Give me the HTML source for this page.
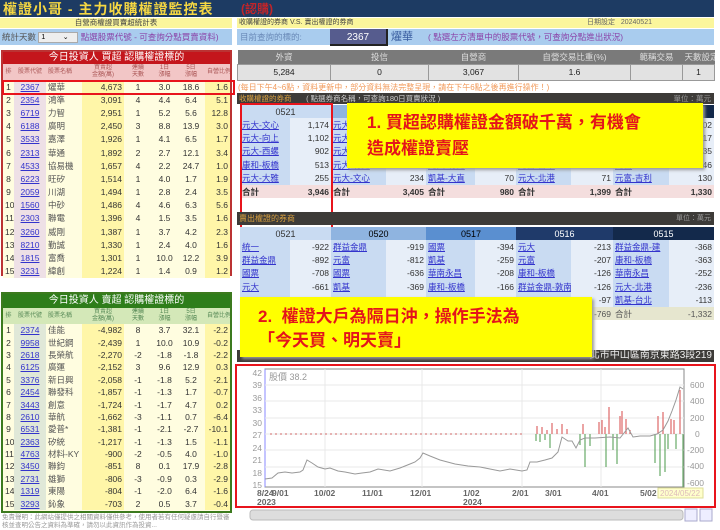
<!DOCTYPE html>
<html><head><meta charset="utf-8"><style>
*{margin:0;padding:0;box-sizing:border-box}
body{width:720px;height:528px;overflow:hidden;background:#fff;font-family:"Liberation Sans","Noto Sans CJK TC",sans-serif;position:relative;font-size:9px}
.a{position:absolute}
table{border-collapse:collapse;table-layout:fixed}
td{padding:0 2px;white-space:nowrap;overflow:hidden}
.lt td{height:13.2px;font-size:8.5px;color:#333;line-height:10px}
.g td{height:12.4px}
.lt td:nth-child(1){text-align:center}
.lt td:nth-child(2){text-align:center;background:#eee0e6;color:#33c;text-decoration:underline}
.lt td:nth-child(3){color:#555}
.lt td:nth-child(4){background:#fff6a8;text-align:right}
.lt td:nth-child(5),.lt td:nth-child(6),.lt td:nth-child(7){text-align:center}
.lt td:nth-child(8){text-align:right;background:#fff6a8}
.lt tr{background:#fffde0}
.g td:nth-child(2){background:#e0e8d8}
.bt td{height:13.4px;font-size:8.5px}
.bt td.n{background:#c9dbf2;color:#33c;text-decoration:underline}
.bt td.v{background:#e7eef8;text-align:right;color:#333}
.bt tr.t td{background:#f4dede;font-weight:bold;color:#333}
.bt tr.t2 td{background:#e6e6cf;color:#555}
.hd td{height:13px;text-align:center;font-size:9px}
.call{background:#ffff00;color:#e4141b;font-weight:bold;font-family:"Liberation Sans","Noto Sans CJK TC",sans-serif;box-shadow:2px 2px 3px #999}
</style></head><body>

<div class="a" style="left:0;top:0;width:714px;height:17px;background:#1d3b63"></div>
<div class="a" style="left:3px;top:-1px;font-size:14px;font-weight:bold;color:#f5d742;letter-spacing:1px">權證小哥 - 主力收購權證監控表</div>
<div class="a" style="left:241px;top:0px;font-size:12px;font-weight:bold;color:#c0252a">(認購)</div>

<div class="a" style="left:0;top:18px;width:232px;height:10px;background:#fbf69c;font-size:7.5px;text-align:center;line-height:10px;color:#444">自營商權證買賣超統計表</div>
<div class="a" style="left:0;top:29px;width:232px;height:16px;background:#a9ccee;font-size:8.5px;line-height:16px;color:#555;padding-left:2px">統計天數 <span style="display:inline-block;width:40px;height:11px;background:#eee;border:1px solid #aaa;vertical-align:middle;font-size:7px;line-height:9px;color:#000">&nbsp;1 &nbsp;&nbsp;&nbsp;&nbsp;&nbsp;&nbsp;&nbsp;&nbsp;⌄</span> <span style="color:#8b44a8">點選股票代號 - 可查詢分點買賣資料)</span></div>

<div class="a" style="left:1px;top:50px;width:231px;height:226px;border:2px solid #b33;background:#fffde0"></div>
<div class="a" style="left:3px;top:52px;width:227px;height:12px;background:#c4161c;color:#fff;font-size:10px;text-align:center;line-height:12px">今日投資人 買超 認購權證標的</div>
<table class="a lt" style="left:3px;top:64px;width:227px">
<colgroup><col style="width:11px"><col style="width:32px"><col style="width:36px"><col style="width:42px"><col style="width:28px"><col style="width:25px"><col style="width:28px"><col style="width:25px"></colgroup>
<tr style="background:#f2c6c6;height:16px"><td style="font-size:6px;color:#a55;line-height:7px">排</td><td style="font-size:6px;color:#a55;background:#f2c6c6;text-decoration:none;line-height:7px">股票代號</td><td style="font-size:6px;color:#a55;line-height:7px">股票名稱</td><td style="font-size:6px;color:#a55;text-align:center;background:#f2c6c6;line-height:7px">買賣超<br>金額(萬)</td><td style="font-size:6px;color:#a55;line-height:7px">連續<br>天數</td><td style="font-size:6px;color:#a55;line-height:7px">1日<br>漲幅</td><td style="font-size:6px;color:#a55;line-height:7px">5日<br>漲幅</td><td style="font-size:6px;color:#a55;background:#f2c6c6;text-align:center;line-height:7px">自營比例</td></tr>
<tr><td>1</td><td>2367</td><td>燿華</td><td>4,673</td><td>1</td><td>3.0</td><td>18.6</td><td>1.6</td></tr>
<tr><td>2</td><td>2354</td><td>鴻準</td><td>3,091</td><td>4</td><td>4.4</td><td>6.4</td><td>5.1</td></tr>
<tr><td>3</td><td>6719</td><td>力智</td><td>2,951</td><td>1</td><td>5.2</td><td>5.6</td><td>12.8</td></tr>
<tr><td>4</td><td>6188</td><td>廣明</td><td>2,450</td><td>3</td><td>8.8</td><td>13.9</td><td>3.0</td></tr>
<tr><td>5</td><td>3533</td><td>嘉澤</td><td>1,926</td><td>1</td><td>4.1</td><td>6.5</td><td>1.7</td></tr>
<tr><td>6</td><td>2313</td><td>華通</td><td>1,892</td><td>2</td><td>2.7</td><td>12.1</td><td>3.4</td></tr>
<tr><td>7</td><td>4533</td><td>協易機</td><td>1,657</td><td>4</td><td>2.2</td><td>24.7</td><td>1.0</td></tr>
<tr><td>8</td><td>6223</td><td>旺矽</td><td>1,514</td><td>1</td><td>4.0</td><td>1.7</td><td>1.9</td></tr>
<tr><td>9</td><td>2059</td><td>川湖</td><td>1,494</td><td>1</td><td>2.8</td><td>2.4</td><td>3.5</td></tr>
<tr><td>10</td><td>1560</td><td>中砂</td><td>1,486</td><td>4</td><td>4.6</td><td>6.3</td><td>5.6</td></tr>
<tr><td>11</td><td>2303</td><td>聯電</td><td>1,396</td><td>4</td><td>1.5</td><td>3.5</td><td>1.6</td></tr>
<tr><td>12</td><td>3260</td><td>威剛</td><td>1,387</td><td>1</td><td>3.7</td><td>4.2</td><td>2.3</td></tr>
<tr><td>13</td><td>8210</td><td>勤誠</td><td>1,330</td><td>1</td><td>2.4</td><td>4.0</td><td>1.6</td></tr>
<tr><td>14</td><td>1815</td><td>富喬</td><td>1,301</td><td>1</td><td>10.0</td><td>12.2</td><td>3.9</td></tr>
<tr><td>15</td><td>3231</td><td>緯創</td><td>1,224</td><td>1</td><td>1.4</td><td>0.9</td><td>1.2</td></tr>
</table>
<div class="a" style="left:2px;top:80px;width:233px;height:15px;border:2px solid #e8141c"></div>

<div class="a" style="left:1px;top:292px;width:231px;height:221px;border:2px solid #3c7a1e;background:#fffde0"></div>
<div class="a" style="left:3px;top:294px;width:227px;height:14px;background:#2e7d1a;color:#fff;font-size:10px;text-align:center;line-height:14px">今日投資人 賣超 認購權證標的</div>
<table class="a lt g" style="left:3px;top:308px;width:227px">
<colgroup><col style="width:11px"><col style="width:32px"><col style="width:36px"><col style="width:42px"><col style="width:28px"><col style="width:25px"><col style="width:28px"><col style="width:25px"></colgroup>
<tr style="background:#d4e8b8;height:16px"><td style="font-size:6px;color:#585;line-height:7px">排</td><td style="font-size:6px;color:#585;background:#d4e8b8;text-decoration:none;line-height:7px">股票代號</td><td style="font-size:6px;color:#585;line-height:7px">股票名稱</td><td style="font-size:6px;color:#585;text-align:center;background:#d4e8b8;line-height:7px">買賣超<br>金額(萬)</td><td style="font-size:6px;color:#585;line-height:7px">連續<br>天數</td><td style="font-size:6px;color:#585;line-height:7px">1日<br>漲幅</td><td style="font-size:6px;color:#585;line-height:7px">5日<br>漲幅</td><td style="font-size:6px;color:#585;background:#d4e8b8;text-align:center;line-height:7px">自營比例</td></tr>
<tr><td>1</td><td>2374</td><td>佳能</td><td>-4,982</td><td>8</td><td>3.7</td><td>32.1</td><td>-2.2</td></tr>
<tr><td>2</td><td>9958</td><td>世紀鋼</td><td>-2,439</td><td>1</td><td>10.0</td><td>10.9</td><td>-0.2</td></tr>
<tr><td>3</td><td>2618</td><td>長榮航</td><td>-2,270</td><td>-2</td><td>-1.8</td><td>-1.8</td><td>-2.2</td></tr>
<tr><td>4</td><td>6125</td><td>廣運</td><td>-2,152</td><td>3</td><td>9.6</td><td>12.9</td><td>0.3</td></tr>
<tr><td>5</td><td>3376</td><td>新日興</td><td>-2,058</td><td>-1</td><td>-1.8</td><td>5.2</td><td>-2.1</td></tr>
<tr><td>6</td><td>2454</td><td>聯發科</td><td>-1,857</td><td>-1</td><td>-1.3</td><td>1.7</td><td>-0.7</td></tr>
<tr><td>7</td><td>3443</td><td>創意</td><td>-1,724</td><td>-1</td><td>-1.7</td><td>4.7</td><td>0.2</td></tr>
<tr><td>8</td><td>2610</td><td>華航</td><td>-1,662</td><td>-3</td><td>-1.1</td><td>0.7</td><td>-6.4</td></tr>
<tr><td>9</td><td>6531</td><td>愛普*</td><td>-1,381</td><td>-1</td><td>-2.1</td><td>-2.7</td><td>-10.1</td></tr>
<tr><td>10</td><td>2363</td><td>矽統</td><td>-1,217</td><td>-1</td><td>-1.3</td><td>1.5</td><td>-1.1</td></tr>
<tr><td>11</td><td>4763</td><td>材料-KY</td><td>-900</td><td>-2</td><td>-0.5</td><td>4.0</td><td>-1.0</td></tr>
<tr><td>12</td><td>3450</td><td>聯鈞</td><td>-851</td><td>8</td><td>0.1</td><td>17.9</td><td>-2.8</td></tr>
<tr><td>13</td><td>2731</td><td>雄獅</td><td>-806</td><td>-3</td><td>-0.9</td><td>0.3</td><td>-2.9</td></tr>
<tr><td>14</td><td>1319</td><td>東陽</td><td>-804</td><td>-1</td><td>-2.0</td><td>6.4</td><td>-1.6</td></tr>
<tr><td>15</td><td>3293</td><td>鈊象</td><td>-703</td><td>2</td><td>0.5</td><td>3.7</td><td>-0.4</td></tr>
</table>
<div class="a" style="left:2px;top:514px;width:232px;font-size:6.5px;color:#999;line-height:8px">免責聲明：此網站僅提供之相關資料僅供參考，使用者若有任何疑慮請自行暨審核並查明公告之資料為準確，請勿以此資訊作為投資...</div>

<div class="a" style="left:237px;top:18px;width:477px;height:10px;background:#fbf69c;font-size:7px;line-height:10px;color:#444;padding-left:2px">收購權證的券商 V.S. 賣出權證的券商<span style="position:absolute;left:350px;color:#666">日期設定 &nbsp;&nbsp;20240521</span></div>
<div class="a" style="left:237px;top:29px;width:477px;height:16px;background:#a9ccee;font-size:8.5px;line-height:16px;color:#6a8ab8;padding-left:3px">目前查詢的標的:</div>
<div class="a" style="left:330px;top:29px;width:58px;height:17px;background:#565c8e;color:#fff;font-size:10px;text-align:center;line-height:17px;border-right:2px solid #222;border-bottom:2px solid #222">2367</div>
<div class="a" style="left:391px;top:29px;font-size:11px;line-height:16px;color:#3a5ea0">燿華</div>
<div class="a" style="left:428px;top:29px;font-size:8.5px;line-height:16px;color:#8b44a8">( 點選左方清單中的股票代號，可查詢分點進出狀況)</div>

<table class="a" style="left:237px;top:50px;width:477px;font-size:8.5px">
<colgroup><col style="width:93px"><col style="width:98px"><col style="width:90px"><col style="width:112px"><col style="width:52px"><col style="width:32px"></colgroup>
<tr style="background:#7a7a7a;color:#ddd;height:14px;text-align:center"><td>外資</td><td>投信</td><td>自營商</td><td>自營交易比重(%)</td><td>範稱交易</td><td>天數設定</td></tr>
<tr style="background:#e2e2e2;color:#222;height:16px;text-align:center"><td style="border:1px solid #999">5,284</td><td style="border:1px solid #999">0</td><td style="border:1px solid #999">3,067</td><td style="border:1px solid #999">1.6</td><td style="border:1px solid #999"></td><td style="border:1px solid #999">1</td></tr>
</table>
<div class="a" style="left:238px;top:82px;font-size:8px;color:#f29a5a">(每日下午4~6點，資料更新中，部分資料無法完整呈現，請在下午6點之後再進行操作！)</div>

<div class="a" style="left:237px;top:93px;width:477px;height:11px;background:#3d3b38;font-size:7.5px;line-height:11px;color:#ccc;padding-left:2px"><span style="color:#d8a040">收購權證的券商</span> &nbsp;&nbsp;&nbsp;&nbsp;&nbsp;&nbsp;( 點選券商名稱，可查詢180日買賣狀況 )<span style="position:absolute;right:3px;color:#999">單位：萬元</span></div>

<table class="a bt" style="left:240px;top:105px;width:474px">
<colgroup><col style="width:50px"><col style="width:41px"><col style="width:55px"><col style="width:40px"><col style="width:49px"><col style="width:41px"><col style="width:55px"><col style="width:42px"><col style="width:56px"><col style="width:45px"></colgroup>
<tr class="hd"><td colspan="2" style="background:#c9dbf2;color:#333">0521</td><td colspan="2" style="background:#8fb4e0">0520</td><td colspan="2" style="background:#5a8fd0">0517</td><td colspan="2" style="background:#1f3a6a;color:#fff">0516</td><td colspan="2" style="background:#13294b;color:#fff">0515</td></tr>
<tr><td class="n">元大-文心</td><td class="v">1,174</td><td class="n">元大</td><td class="v"></td><td class="n"></td><td class="v"></td><td class="n"></td><td class="v"></td><td class="n"></td><td class="v">402</td></tr>
<tr><td class="n">元大-向上</td><td class="v">1,102</td><td class="n">元大</td><td class="v"></td><td class="n"></td><td class="v"></td><td class="n"></td><td class="v"></td><td class="n"></td><td class="v">317</td></tr>
<tr><td class="n">元大-西螺</td><td class="v">902</td><td class="n">元大</td><td class="v"></td><td class="n"></td><td class="v"></td><td class="n"></td><td class="v"></td><td class="n"></td><td class="v">235</td></tr>
<tr><td class="n">康和-板橋</td><td class="v">513</td><td class="n">元大-竹北</td><td class="v">330</td><td class="n">元大-竹北</td><td class="v">77</td><td class="n">元富-台中</td><td class="v">161</td><td class="n">元富</td><td class="v">146</td></tr>
<tr><td class="n">元大-大雅</td><td class="v">255</td><td class="n">元大-文心</td><td class="v">234</td><td class="n">凱基-大直</td><td class="v">70</td><td class="n">元大-北港</td><td class="v">71</td><td class="n">元富-吉利</td><td class="v">130</td></tr>
<tr class="t"><td>合計</td><td style="text-align:right">3,946</td><td>合計</td><td style="text-align:right">3,405</td><td>合計</td><td style="text-align:right">980</td><td>合計</td><td style="text-align:right">1,399</td><td>合計</td><td style="text-align:right">1,330</td></tr>
</table>
<div class="a" style="left:240px;top:103px;width:93px;height:168px;border:2px solid #e8141c"></div>

<div class="a" style="left:237px;top:212px;width:477px;height:13px;background:#3d3b38;font-size:8px;line-height:13px;color:#d8a040;padding-left:2px">賣出權證的券商<span style="position:absolute;right:3px;color:#999;font-size:7px">單位：萬元</span></div>
<table class="a bt" style="left:240px;top:227px;width:474px">
<colgroup><col style="width:50px"><col style="width:41px"><col style="width:55px"><col style="width:40px"><col style="width:49px"><col style="width:41px"><col style="width:55px"><col style="width:42px"><col style="width:56px"><col style="width:45px"></colgroup>
<tr class="hd"><td colspan="2" style="background:#c9dbf2;color:#333">0521</td><td colspan="2" style="background:#8fb4e0">0520</td><td colspan="2" style="background:#5a8fd0">0517</td><td colspan="2" style="background:#1f3a6a;color:#fff">0516</td><td colspan="2" style="background:#13294b;color:#fff">0515</td></tr>
<tr><td class="n">統一</td><td class="v">-922</td><td class="n">群益金鼎</td><td class="v">-919</td><td class="n">國票</td><td class="v">-394</td><td class="n">元大</td><td class="v">-213</td><td class="n">群益金鼎-建</td><td class="v">-368</td></tr>
<tr><td class="n">群益金鼎</td><td class="v">-892</td><td class="n">元富</td><td class="v">-812</td><td class="n">凱基</td><td class="v">-259</td><td class="n">元富</td><td class="v">-207</td><td class="n">康和-板橋</td><td class="v">-363</td></tr>
<tr><td class="n">國票</td><td class="v">-708</td><td class="n">國票</td><td class="v">-636</td><td class="n">華南永昌</td><td class="v">-208</td><td class="n">康和-板橋</td><td class="v">-126</td><td class="n">華南永昌</td><td class="v">-252</td></tr>
<tr><td class="n">元大</td><td class="v">-661</td><td class="n">凱基</td><td class="v">-369</td><td class="n">康和-板橋</td><td class="v">-166</td><td class="n">群益金鼎-敦南</td><td class="v">-126</td><td class="n">元大-北港</td><td class="v">-236</td></tr>
<tr><td class="n"></td><td class="v"></td><td class="n"></td><td class="v"></td><td class="n"></td><td class="v"></td><td class="n"></td><td class="v">-97</td><td class="n">凱基-台北</td><td class="v">-113</td></tr>
<tr class="t2"><td></td><td></td><td></td><td></td><td></td><td></td><td></td><td style="text-align:right">-769</td><td>合計</td><td style="text-align:right">-1,332</td></tr>
</table>

<div class="a" style="left:237px;top:350px;width:477px;height:12px;background:#3d3b38;color:#eee;font-size:10px;line-height:12px;text-align:right;padding-right:2px;overflow:hidden">北市中山區南京東路3段219</div>

<div class="a call" style="left:347px;top:103px;width:356px;height:65px;font-size:17px;line-height:26px;padding:7px 0 0 20px">1. 買超認購權證金額破千萬，有機會<br>造成權證賣壓</div>
<div class="a call" style="left:240px;top:297px;width:352px;height:60px;font-size:17px;line-height:24px;padding:8px 0 0 18px">2.&nbsp; 權證大戶為隔日沖，操作手法為<br>「今天買、明天賣」</div>

<div class="a" style="left:235px;top:364px;width:481px;height:144px;border:2px solid #e8141c;background:#fff"></div>
<svg class="a" style="left:0;top:0" width="720" height="528" font-family="Liberation Sans" font-size="8" fill="#999">
<rect x="265" y="369" width="419" height="118" fill="none" stroke="#888"/>
<line x1="265" y1="369" x2="265" y2="487" stroke="#88f"/>
<g stroke="#e8e8e8"><line x1="325" y1="369" x2="325" y2="487"/><line x1="422" y1="369" x2="422" y2="487"/><line x1="522" y1="369" x2="522" y2="487"/><line x1="601" y1="369" x2="601" y2="487"/><line x1="265" y1="385" x2="684" y2="385"/><line x1="265" y1="401" x2="684" y2="401"/><line x1="265" y1="418" x2="684" y2="418"/><line x1="265" y1="434" x2="684" y2="434"/><line x1="265" y1="450" x2="684" y2="450"/><line x1="265" y1="467" x2="684" y2="467"/></g>
<g text-anchor="end" font-size="8.5"><text x="262" y="376">42</text><text x="262" y="388">39</text><text x="262" y="401">36</text><text x="262" y="413">33</text><text x="262" y="426">30</text><text x="262" y="438">27</text><text x="262" y="451">24</text><text x="262" y="463">21</text><text x="262" y="476">18</text><text x="262" y="488">15</text></g>
<g font-size="8.5"><text x="690" y="388">600</text><text x="690" y="404">400</text><text x="690" y="421">200</text><text x="695" y="437">0</text><text x="687" y="453">-200</text><text x="687" y="469">-400</text><text x="687" y="486">-600</text></g>
<text x="269" y="380" font-size="9">股價 38.2</text>
<g stroke="#d66" stroke-width="1.2"><line x1="537" y1="434" x2="537" y2="426"/><line x1="542" y1="434" x2="542" y2="427"/><line x1="547" y1="434" x2="547" y2="430"/><line x1="552" y1="434" x2="552" y2="423"/><line x1="557" y1="434" x2="557" y2="429"/><line x1="562" y1="434" x2="562" y2="424"/><line x1="567" y1="434" x2="567" y2="429"/><line x1="583" y1="434" x2="583" y2="424"/><line x1="599" y1="434" x2="599" y2="422"/><line x1="602" y1="434" x2="602" y2="420"/><line x1="605" y1="434" x2="605" y2="427"/><line x1="609" y1="434" x2="609" y2="407"/><line x1="620" y1="434" x2="620" y2="416"/><line x1="622" y1="434" x2="622" y2="411"/><line x1="626" y1="434" x2="626" y2="419"/><line x1="630" y1="434" x2="630" y2="430"/><line x1="658" y1="434" x2="658" y2="416"/><line x1="663" y1="434" x2="663" y2="412"/><line x1="671" y1="434" x2="671" y2="419"/><line x1="674" y1="434" x2="674" y2="420"/><line x1="680" y1="434" x2="680" y2="390"/></g>
<g stroke="#6a6" stroke-width="1.2"><line x1="536" y1="434" x2="536" y2="441"/><line x1="540" y1="434" x2="540" y2="442"/><line x1="545" y1="434" x2="545" y2="440"/><line x1="550" y1="434" x2="550" y2="448"/><line x1="580" y1="434" x2="580" y2="445"/><line x1="585" y1="434" x2="585" y2="467"/><line x1="590" y1="434" x2="590" y2="446"/><line x1="606" y1="434" x2="606" y2="467"/><line x1="613" y1="434" x2="613" y2="450"/><line x1="617" y1="434" x2="617" y2="464"/><line x1="655" y1="434" x2="655" y2="463"/><line x1="660" y1="434" x2="660" y2="476"/><line x1="665" y1="434" x2="665" y2="472"/><line x1="668" y1="434" x2="668" y2="449"/><line x1="676" y1="434" x2="676" y2="449"/><line x1="683" y1="434" x2="683" y2="487"/></g>
<path d="M270 434H525" stroke="#d99" stroke-dasharray="2 3" stroke-width="1.5"/>
<polyline fill="none" stroke="#999" stroke-width="1" points="265,479 272,478 278,473 285,472 292,473 300,472 303,470 307,460 312,463 318,467 325,469 330,468 338,471 345,472 355,474 362,473 370,472 378,469 390,471 400,468 410,464 415,462 420,458 423,453 430,456 440,460 455,464 468,466 480,467 490,469 500,471 510,469 522,471 527,470 530,462 537,462 545,460 552,458 558,452 562,437 568,441 572,441 576,448 580,440 585,438 595,438 610,437 620,438 628,428 633,437 640,436 650,436 657,434 663,430 668,421 672,411 676,400 680,387 683,389"/>
<g fill="#666" font-weight="bold" font-size="8.5"><text x="257" y="496">8/24</text><text x="272" y="496">9/01</text><text x="314" y="496">10/02</text><text x="362" y="496">11/01</text><text x="410" y="496">12/01</text><text x="463" y="496">1/02</text><text x="512" y="496">2/01</text><text x="545" y="496">3/01</text><text x="592" y="496">4/01</text><text x="640" y="496">5/02</text><text x="257" y="505">2023</text><text x="463" y="505">2024</text></g>
<rect x="658" y="488" width="45" height="10" fill="#ffffcc" stroke="#dd9"/>
<text x="660" y="496" fill="#dbb" font-size="8">2024/05/22</text>
<rect x="250" y="510" width="433" height="10" rx="3" fill="#ddd" stroke="#bbb"/>
<rect x="685" y="509" width="12" height="12" fill="#eef" stroke="#aac"/><rect x="700" y="509" width="12" height="12" fill="#eef" stroke="#aac"/>
</svg>
</body></html>
